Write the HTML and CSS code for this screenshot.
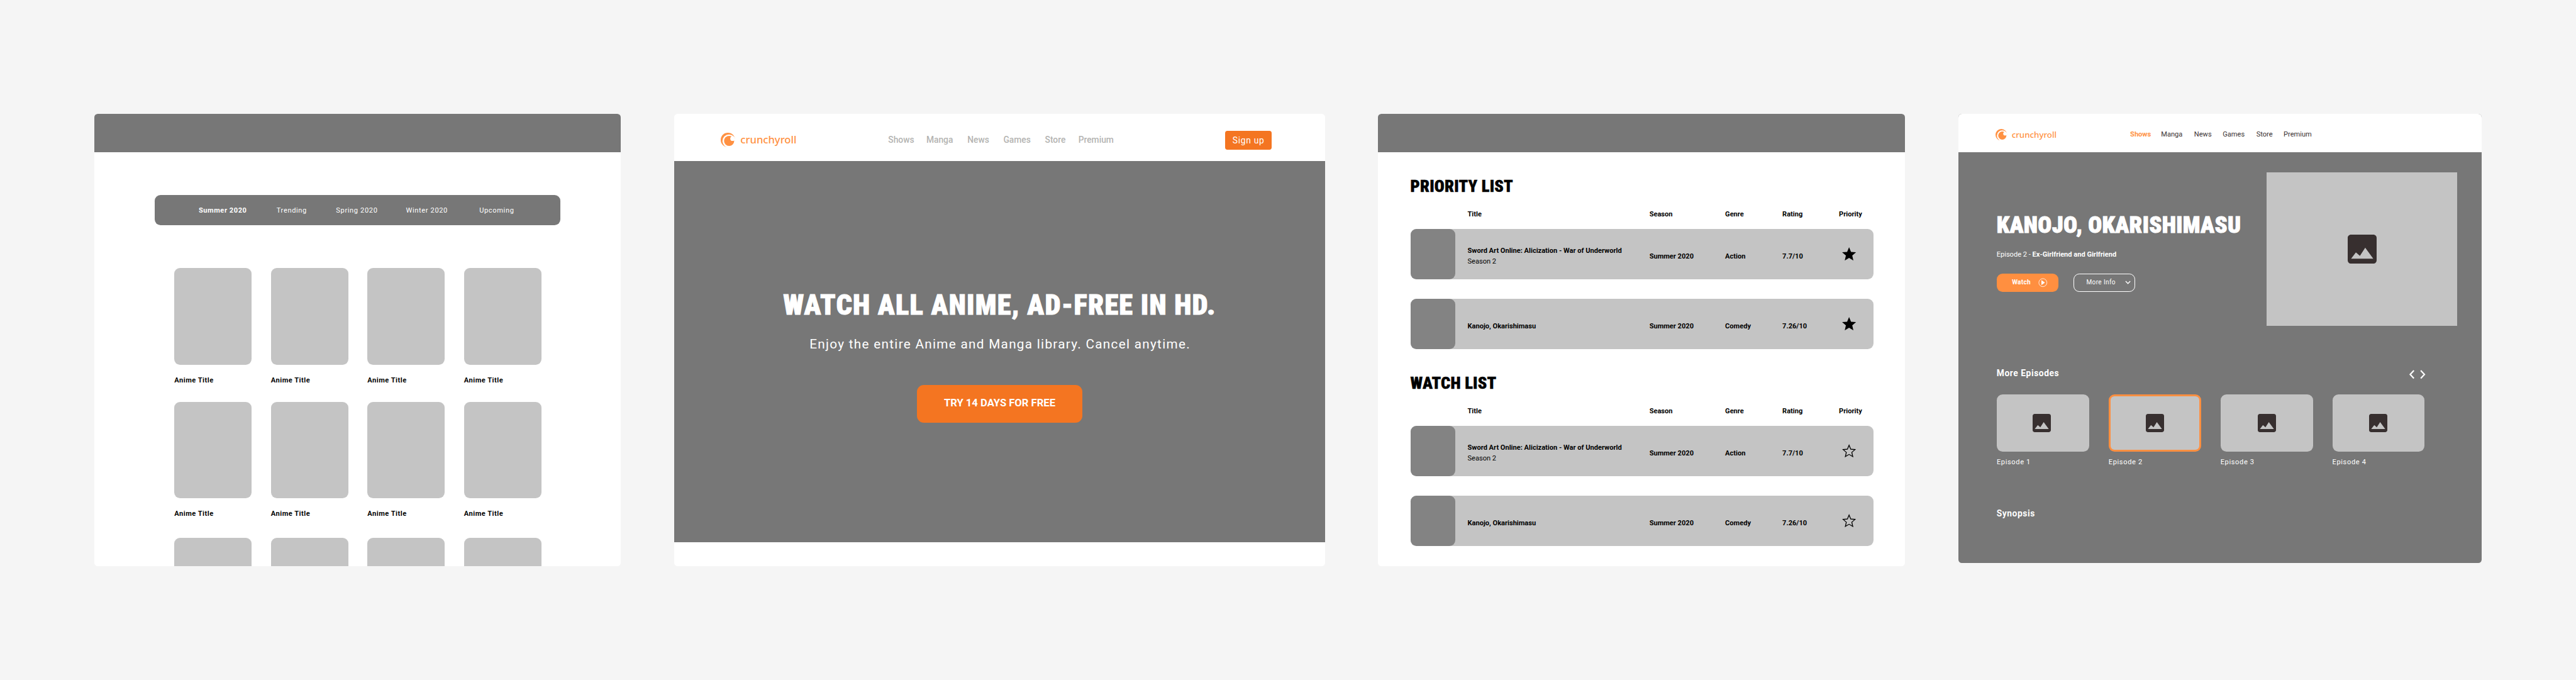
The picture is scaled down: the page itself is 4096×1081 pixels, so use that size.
FILE: index.html
```html
<!DOCTYPE html>
<html lang="en">
<head>
<meta charset="utf-8">
<title>Crunchyroll wireframes</title>
<link rel="stylesheet" href="styles.css">
</head>
<body>
<svg class="defs" width="0" height="0">
  <symbol id="logo" viewBox="0 0 76 76"><circle cx="37.5" cy="37.5" r="37.5" fill="#ff9142"/><circle cx="43.5" cy="43.5" r="34.5" fill="#fff"/><circle cx="44" cy="43" r="26.5" fill="#ff9142"/><circle cx="62" cy="31" r="12" fill="#fff"/></symbol>
  <symbol id="image" viewBox="3 3 18 18"><path fill="#372f2f" d="M21 19V5c0-1.1-.9-2-2-2H5c-1.1 0-2 .9-2 2v14c0 1.1.9 2 2 2h14c1.1 0 2-.9 2-2zM8.1 14l2.5 2.2 3.3-5.1 5 6.8H5.1z"/></symbol>
  <symbol id="star" viewBox="2 2 20 19"><path d="M12 17.27L18.18 21l-1.64-7.03L22 9.24l-7.19-.61L12 2 9.19 8.63 2 9.24l5.46 4.73L5.82 21z"/></symbol>
  <symbol id="star-o" viewBox="2 2 20 19"><path d="M22 9.24l-7.19-.62L12 2 9.19 8.63 2 9.24l5.46 4.73L5.82 21 12 17.27 18.18 21l-1.63-7.03L22 9.24zM12 16.05l-4.42 2.67 1.17-5.03-3.9-3.39 5.14-.44L12 5.05l2.01 4.81 5.14.44-3.9 3.39 1.17 5.03z"/></symbol>
</svg>

<main class="board">
  <section class="panel shows">
    <div class="bar"></div>
    <nav class="tabs"><b>Summer 2020</b><span>Trending</span><span>Spring 2020</span><span>Winter 2020</span><span>Upcoming</span></nav>
    <div class="grid">
      <div class="show"><div class="poster"></div><p>Anime Title</p></div>
      <div class="show"><div class="poster"></div><p>Anime Title</p></div>
      <div class="show"><div class="poster"></div><p>Anime Title</p></div>
      <div class="show"><div class="poster"></div><p>Anime Title</p></div>
      <div class="show"><div class="poster"></div><p>Anime Title</p></div>
      <div class="show"><div class="poster"></div><p>Anime Title</p></div>
      <div class="show"><div class="poster"></div><p>Anime Title</p></div>
      <div class="show"><div class="poster"></div><p>Anime Title</p></div>
      <div class="poster last"></div>
      <div class="poster last"></div>
      <div class="poster last"></div>
      <div class="poster last"></div>
    </div>
  </section>

  <section class="panel landing">
    <header>
      <div class="logo"><svg><use href="#logo"/></svg><span>crunchyroll</span></div>
      <nav><span>Shows</span><span>Manga</span><span>News</span><span>Games</span><span>Store</span><span>Premium</span></nav>
      <div class="signup">Sign up</div>
    </header>
    <div class="hero">
      <h1>WATCH ALL ANIME, AD-FREE IN HD.</h1>
      <p>Enjoy the entire Anime and Manga library. Cancel anytime.</p>
      <div class="cta">TRY 14 DAYS FOR FREE</div>
    </div>
  </section>

  <section class="panel lists">
    <div class="bar"></div>
    <h2>PRIORITY LIST</h2>
    <div class="head"><i></i><span>Title</span><span>Season</span><span>Genre</span><span>Rating</span><span>Priority</span></div>
    <div class="row"><i class="thumb"></i><div>Sword Art Online: Alicization - War of Underworld<small>Season 2</small></div><span>Summer 2020</span><span>Action</span><span>7.7/10</span><svg class="star"><use href="#star"/></svg></div>
    <div class="row"><i class="thumb"></i><div>Kanojo, Okarishimasu</div><span>Summer 2020</span><span>Comedy</span><span>7.26/10</span><svg class="star"><use href="#star"/></svg></div>
    <h2 class="second">WATCH LIST</h2>
    <div class="head"><i></i><span>Title</span><span>Season</span><span>Genre</span><span>Rating</span><span>Priority</span></div>
    <div class="row"><i class="thumb"></i><div>Sword Art Online: Alicization - War of Underworld<small>Season 2</small></div><span>Summer 2020</span><span>Action</span><span>7.7/10</span><svg class="star"><use href="#star-o"/></svg></div>
    <div class="row"><i class="thumb"></i><div>Kanojo, Okarishimasu</div><span>Summer 2020</span><span>Comedy</span><span>7.26/10</span><svg class="star"><use href="#star-o"/></svg></div>
  </section>

  <section class="panel detail">
    <header>
      <div class="logo"><svg><use href="#logo"/></svg><span>crunchyroll</span></div>
      <nav><b>Shows</b><span>Manga</span><span>News</span><span>Games</span><span>Store</span><span>Premium</span></nav>
    </header>
    <div class="feature">
      <div class="info">
        <h1>KANOJO, OKARISHIMASU</h1>
        <p>Episode 2 - <b>Ex-Girlfriend and Girlfriend</b></p>
        <div class="actions">
          <div class="btn watch">Watch<svg viewBox="0 0 16 16"><circle cx="8" cy="8" r="7" fill="none" stroke="#fff" stroke-width=".9"/><path d="M5.4 3.6L11.6 8l-6.2 4.4z" fill="#fff"/></svg></div>
          <div class="btn more">More Info<svg viewBox="0 0 10 7"><path d="M1 1.2l4 4 4-4" fill="none" stroke="#fff" stroke-width="1.5"/></svg></div>
        </div>
      </div>
      <div class="cover"><svg><use href="#image"/></svg></div>
    </div>
    <div class="subhead"><h3>More Episodes</h3>
      <svg viewBox="0 0 30 16"><path d="M9 1.2L2.6 8 9 14.8M21 1.2L27.4 8 21 14.8" fill="none" stroke="#fff" stroke-width="2.4"/></svg>
    </div>
    <div class="episodes">
      <div><div class="frame"><svg><use href="#image"/></svg></div><p>Episode 1</p></div>
      <div><div class="frame current"><svg><use href="#image"/></svg></div><p>Episode 2</p></div>
      <div><div class="frame"><svg><use href="#image"/></svg></div><p>Episode 3</p></div>
      <div><div class="frame"><svg><use href="#image"/></svg></div><p>Episode 4</p></div>
    </div>
    <h3>Synopsis</h3>
  </section>
</main>
</body>
</html>
```
FILE: styles.css
```css
* { box-sizing: border-box; margin: 0; padding: 0; }
html { background: #f5f5f5; }
body { zoom: .912656; height: 1183px; overflow: hidden; font-family: Roboto, "Liberation Sans", sans-serif; font-size: 12.13px; line-height: 18px; white-space: nowrap; background: #f5f5f5; }
.defs { position: absolute; }
svg { display: block; flex: none; }

.board { display: grid; grid-template-columns: 918px 1133.4px 918px 911.2px; column-gap: 92.9px; padding: 198.3px 0 0 164px; align-items: start; }
.panel { height: 788px; background: #fff; border-radius: 6px; overflow: hidden; }
.bar { height: 67px; background: #777; }

/* Seasonal grid */
.tabs { display: grid; grid-template-columns: 135.7px 103.6px 121.8px 127.9px auto; align-items: center; margin: 74.5px 0 0 106px; width: 706.5px; height: 52.5px; padding: 3px 0 0 76.2px; border-radius: 10px; background: #777; color: #fff; letter-spacing: .7px; }
.tabs b { letter-spacing: .62px; }
.grid { display: grid; grid-template-columns: repeat(4, 134.5px); column-gap: 33.7px; margin: 74.8px 0 0 139.8px; }
.poster { height: 168px; border-radius: 10px; background: #c4c4c4; }
.show { margin-bottom: 27.8px; }
.show p { margin-top: 18.9px; font-weight: 700; letter-spacing: .56px; }
.last { margin-top: 5px; }

/* Landing page */
header { display: flex; align-items: center; }
.logo { display: flex; align-items: center; color: #ff9142; font-family: "Noto Sans", sans-serif; font-weight: 500; }
header nav { display: grid; }
.landing header { height: 82.5px; padding: 9px 92.4px 0 80.6px; }
.landing .logo { width: 292px; font-size: 18.2px; gap: 9.2px; }
.landing .logo svg { width: 25.3px; height: 25.3px; }
.landing .logo span { margin-top: -2px; }
.landing nav { grid-template-columns: 66.4px 71.6px 62.7px 72.4px 58.2px auto; margin-top: -2px; color: #b4b4b2; font-size: 15.15px; font-weight: 500; }
.signup { margin: 1px 0 0 auto; width: 81.5px; height: 33px; border-radius: 4px; background: #f47521; color: #fff; font-size: 15.15px; line-height: 33px; text-align: center; letter-spacing: .76px; }
.hero { height: 663.5px; padding-top: 226.4px; background: #777; color: #fff; text-align: center; }
h1, h2 { font-weight: 900; font-stretch: 75%; -webkit-text-stroke: 1px; }
.hero h1 { font-size: 48.8px; line-height: 50px; letter-spacing: 1.32px; }
.hero p { margin-top: 23px; padding-left: 1.5px; font-size: 22.7px; line-height: 40px; letter-spacing: 1.42px; }
.cta { margin: 50.1px auto 0; width: 289px; height: 66px; border-radius: 12px; background: #f47521; font-size: 18.2px; font-weight: 700; line-height: 64px; }

/* Priority and watch lists */
.lists h2 { margin: 43.8px 0 0 56px; font-size: 29px; line-height: 30px; letter-spacing: .25px; -webkit-text-stroke: .5px; }
.lists h2.second { margin-top: 44.1px; }
.head, .row { display: grid; grid-template-columns: 99.4px 316.8px 132px 99.7px 98.6px auto; margin-left: 56.3px; width: 807px; font-weight: 700; }
.head { margin-top: 25.6px; margin-bottom: 15.9px; }
.row { height: 87.7px; align-items: center; border-radius: 10px; background: #c4c4c4; }
.row + .row { margin-top: 34px; }
.row div, .row span { padding-top: 9px; }
.row small { display: block; font-size: 12.13px; font-weight: 400; }
.thumb { width: 78px; height: 87.7px; border-radius: 10px; background: #838383; }
.star { width: 24.4px; height: 23.2px; margin-left: 5.4px; }

/* Show detail */
.detail { height: 782px; background: #777; color: #fff; }
.detail header { height: 66.6px; padding: 5.8px 0 0 64.6px; background: #fff; }
.detail .logo { width: 234.6px; font-size: 14.6px; gap: 7.8px; }
.detail .logo svg { width: 20.4px; height: 20.4px; }
.detail nav { grid-template-columns: 53.9px 57.6px 49.8px 58.6px 47.5px auto; color: #372f2f; }
.detail nav b { color: #ff9142; }
.feature { display: flex; padding: 35.4px 0 0 66.5px; }
.info { width: 470.5px; padding-top: 72.2px; }
.info h1 { font-size: 40px; line-height: 40px; letter-spacing: .36px; }
.info p { margin-top: 22.5px; }
.actions { display: flex; gap: 26.7px; margin-top: 23.9px; }
.btn { display: flex; align-items: center; height: 31.5px; width: 107.6px; border-radius: 10px; font-size: 11px; }
.watch { padding-left: 26.8px; gap: 13.3px; background: #ff8f40; font-weight: 700; letter-spacing: .35px; }
.watch svg { width: 16px; height: 16px; }
.more { padding-left: 21px; gap: 16.8px; border: 1px solid #fff; letter-spacing: .42px; }
.more svg { width: 10px; height: 7px; }
.cover { display: flex; align-items: center; justify-content: center; width: 332px; height: 267px; background: #c4c4c4; }
.cover svg { width: 50.4px; height: 50.6px; }
.subhead { display: flex; justify-content: space-between; width: 748px; margin: 73px 0 0 66.5px; }
.subhead svg { width: 30px; height: 16px; margin-top: 4.5px; }
h3 { font-size: 15.15px; line-height: 20px; letter-spacing: .62px; }
.episodes { display: grid; grid-template-columns: repeat(4, 161px); column-gap: 33.9px; margin: 26px 0 69.7px 66.7px; }
.frame { display: flex; align-items: center; justify-content: center; height: 100px; border-radius: 10px; background: #c4c4c4; }
.frame svg { width: 31.8px; height: 31.8px; }
.episodes > :first-child svg { margin-right: 3px; }
.current { border: 3.3px solid #ff8f40; }
.episodes p { margin-top: 9.5px; letter-spacing: .7px; }
.detail > h3 { margin-left: 66.5px; }
```
